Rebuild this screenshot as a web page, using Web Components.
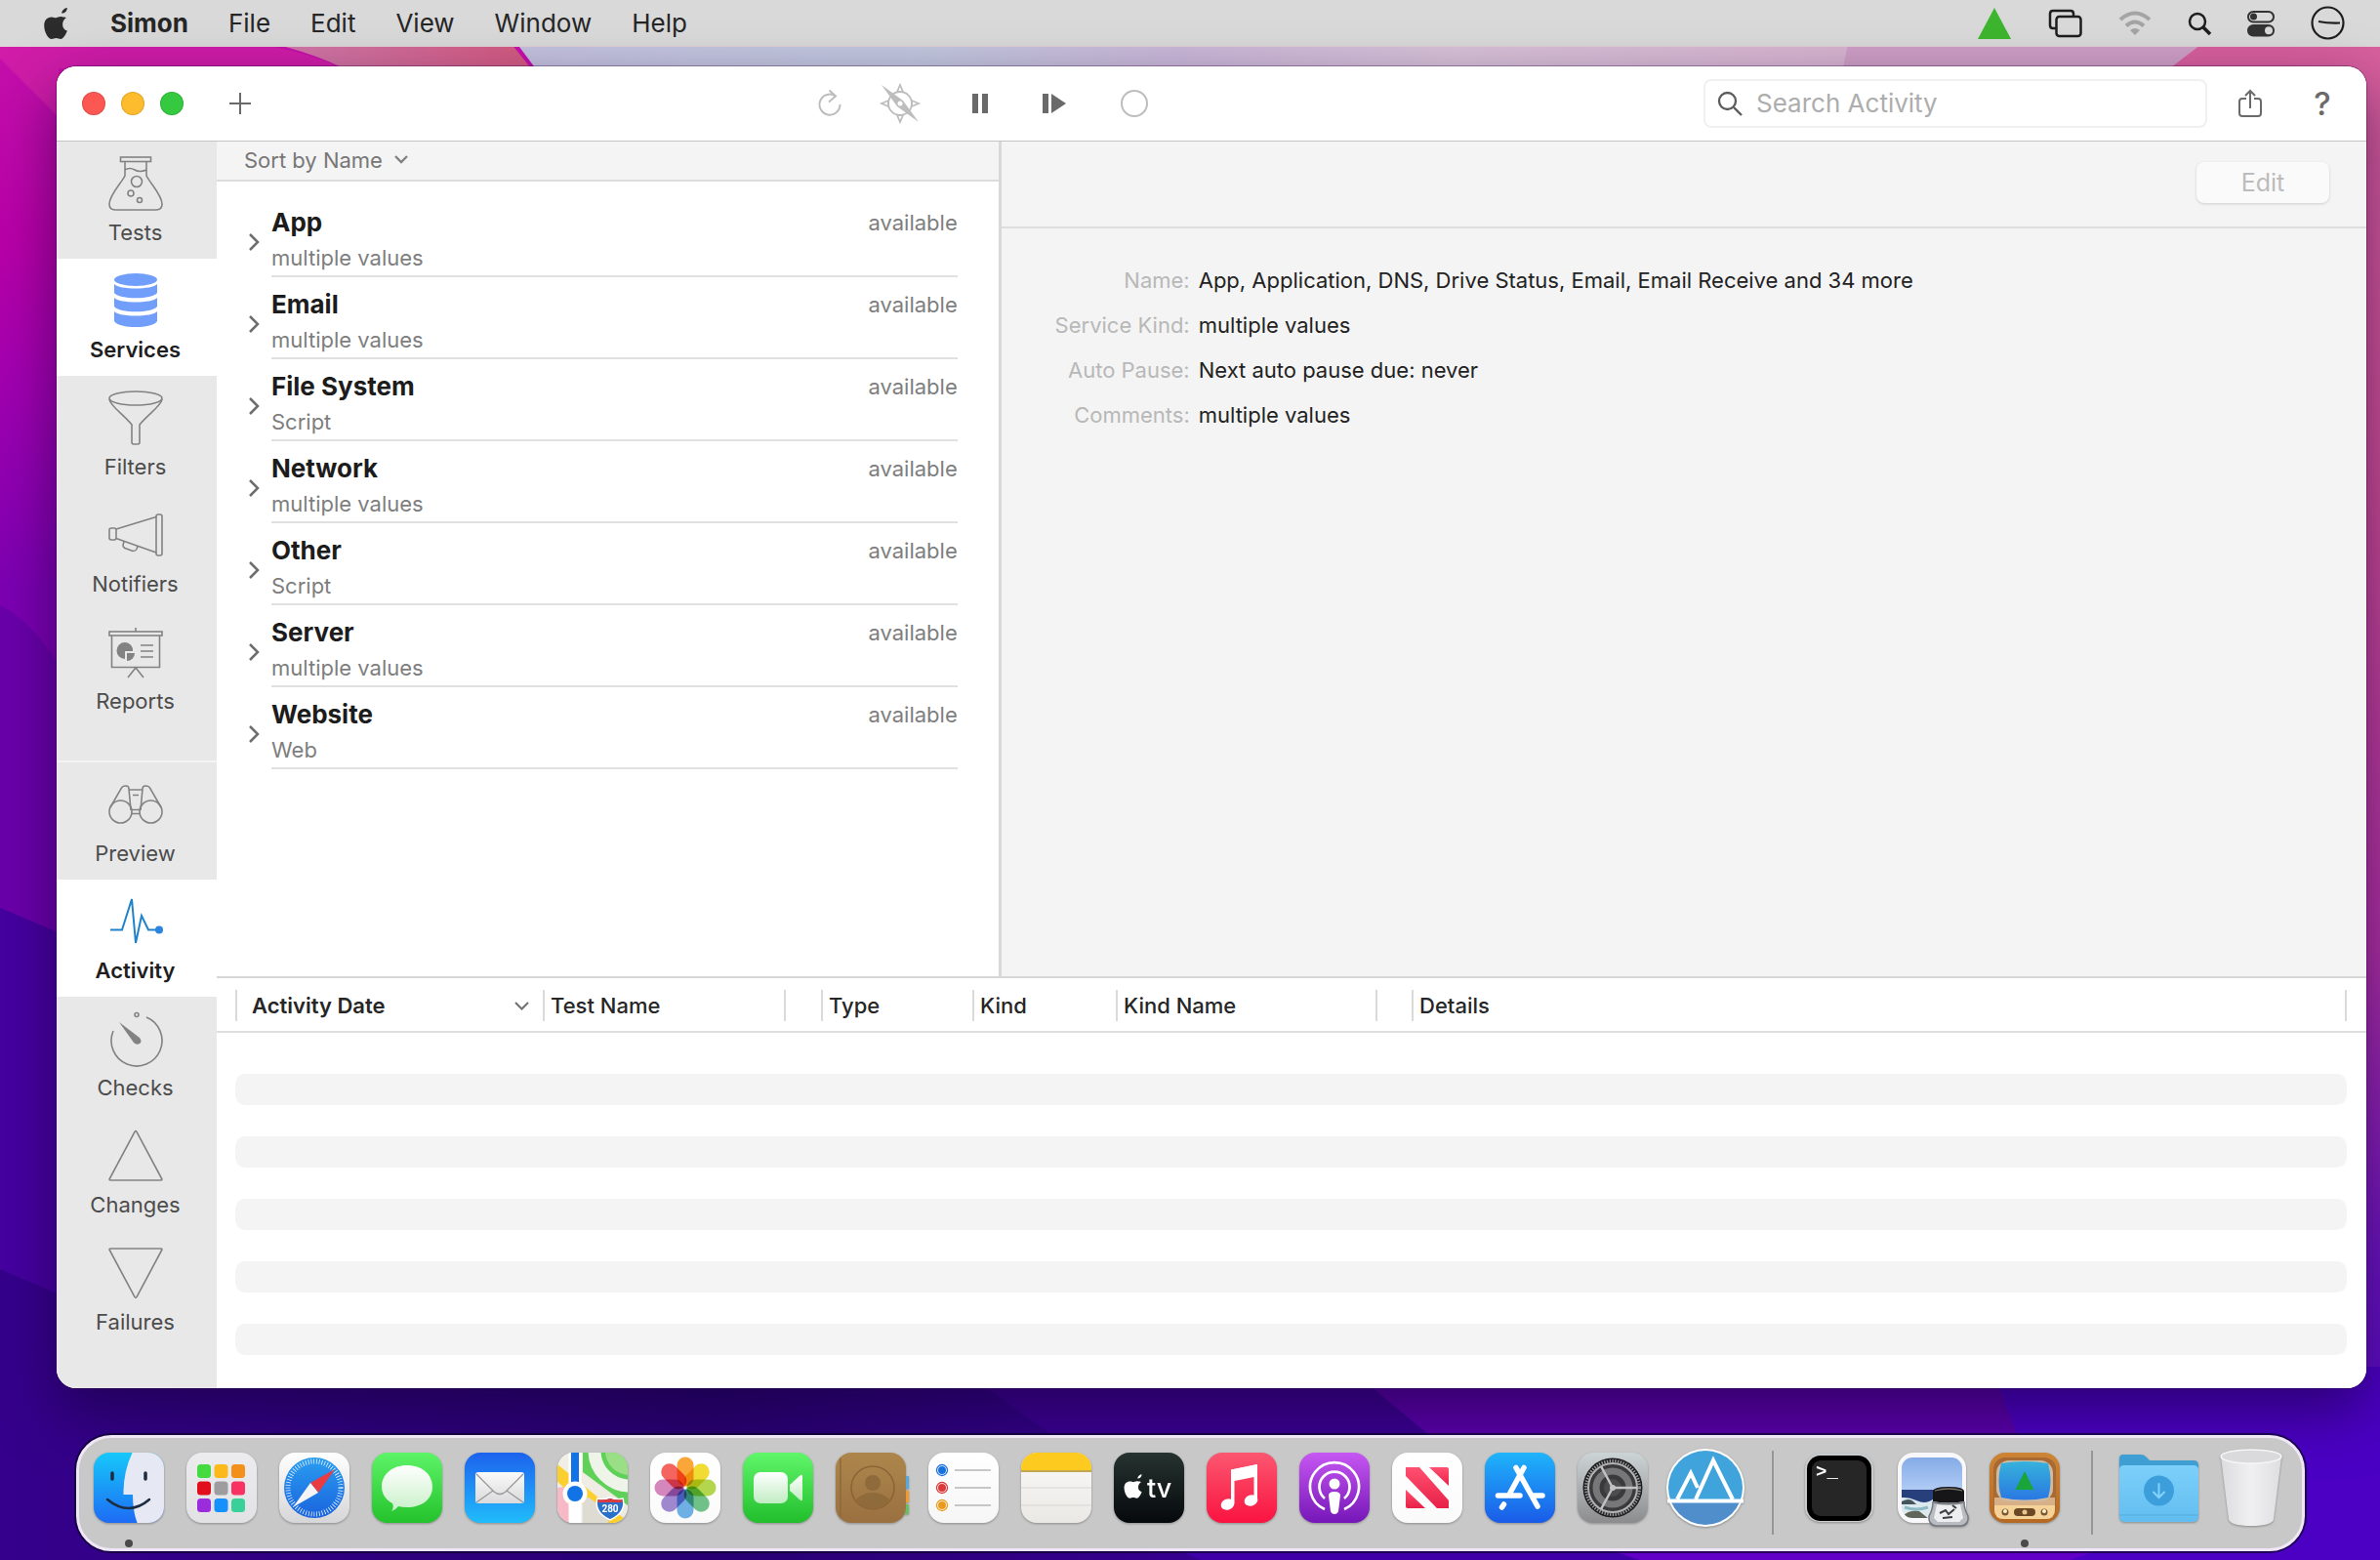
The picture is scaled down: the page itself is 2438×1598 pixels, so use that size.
<!DOCTYPE html>
<html lang="en">
<head>
<meta charset="utf-8">
<title>Simon</title>
<style>
html, body { margin: 0; height: 100%; }
body { font-family: Inter, "Liberation Sans", sans-serif; font-size: 22px; color: #262626; }
</style>
</head>
<body>
<mac-desktop>
  <menu-bar slot="menu"></menu-bar>
  <app-window>
    <tool-bar slot="toolbar"></tool-bar>
    <nav-rail slot="rail">
      <rail-item icon="tests">Tests</rail-item>
      <rail-item icon="services" active>Services</rail-item>
      <rail-item icon="filters">Filters</rail-item>
      <rail-item icon="notifiers">Notifiers</rail-item>
      <rail-item icon="reports">Reports</rail-item>
      <rail-item slot="lower" icon="preview">Preview</rail-item>
      <rail-item slot="lower" icon="activity" active>Activity</rail-item>
      <rail-item slot="lower" icon="checks">Checks</rail-item>
      <rail-item slot="lower" icon="changes">Changes</rail-item>
      <rail-item slot="lower" icon="failures">Failures</rail-item>
    </nav-rail>
    <service-list slot="list">
      <service-row kind="multiple values" status="available">App</service-row>
      <service-row kind="multiple values" status="available">Email</service-row>
      <service-row kind="Script" status="available">File System</service-row>
      <service-row kind="multiple values" status="available">Network</service-row>
      <service-row kind="Script" status="available">Other</service-row>
      <service-row kind="multiple values" status="available">Server</service-row>
      <service-row kind="Web" status="available">Website</service-row>
    </service-list>
    <detail-pane slot="detail">
      <detail-field label="Name:">App, Application, DNS, Drive Status, Email, Email Receive and 34 more</detail-field>
      <detail-field label="Service Kind:">multiple values</detail-field>
      <detail-field label="Auto Pause:">Next auto pause due: never</detail-field>
      <detail-field label="Comments:">multiple values</detail-field>
    </detail-pane>
    <activity-table slot="activity"></activity-table>
  </app-window>
  <app-dock slot="dock">
    <dock-icon icon="finder" title="Finder" running></dock-icon>
    <dock-icon icon="launchpad" title="Launchpad"></dock-icon>
    <dock-icon icon="safari" title="Safari"></dock-icon>
    <dock-icon icon="messages" title="Messages"></dock-icon>
    <dock-icon icon="mail" title="Mail"></dock-icon>
    <dock-icon icon="maps" title="Maps"></dock-icon>
    <dock-icon icon="photos" title="Photos"></dock-icon>
    <dock-icon icon="facetime" title="FaceTime"></dock-icon>
    <dock-icon icon="contacts" title="Contacts"></dock-icon>
    <dock-icon icon="reminders" title="Reminders"></dock-icon>
    <dock-icon icon="notes" title="Notes"></dock-icon>
    <dock-icon icon="tv" title="TV"></dock-icon>
    <dock-icon icon="music" title="Music"></dock-icon>
    <dock-icon icon="podcasts" title="Podcasts"></dock-icon>
    <dock-icon icon="news" title="News"></dock-icon>
    <dock-icon icon="appstore" title="App Store"></dock-icon>
    <dock-icon icon="settings" title="System Preferences"></dock-icon>
    <dock-icon icon="peaks" title="Peaks"></dock-icon>
    <dock-divider></dock-divider>
    <dock-icon icon="terminal" title="Terminal"></dock-icon>
    <dock-icon icon="viewer" title="Preview"></dock-icon>
    <dock-icon icon="simon" title="Simon" running></dock-icon>
    <dock-divider></dock-divider>
    <dock-icon icon="downloads" title="Downloads"></dock-icon>
    <dock-icon icon="trash" title="Trash"></dock-icon>
  </app-dock>
</mac-desktop>

<script>
const RESET = `
:host, *, *::before, *::after { box-sizing: border-box; }
button, input, select { font: inherit; color: inherit; background: none; border: 0; margin: 0; padding: 0; }
svg { display: block; overflow: visible; }
`;

function define(name, css, render) {
  customElements.define(name, class extends HTMLElement {
    constructor() {
      super();
      this.attachShadow({ mode: "open" });
    }
    connectedCallback() {
      this.shadowRoot.innerHTML = `<style>${RESET}${css}</style>${render(this)}`;
    }
  });
}

const APPLE = "M17 4c1-3 4-5 6-5 0 3-2 6-6 6zM22 10c-2 1-4 4-4 7 0 4 2 6 5 7-1 3-4 9-7 9-2 0-3-1-5-1s-3 1-5 1C3 33-2 26-2 18c0-6 4-9 8-9 2 0 4 1 5 1s4-2 7-1c2 0 3 0 4 1z";

/* ---------- rail icons, 56 x 56 ---------- */
const RAIL = {
  tests: `<rect x="12.500" y="1" width="31" height="4.500"/><path d="M17 5.500V20C13 28 1 40 1 49q0 6 6 6h42q6 0 6-6C55 40 43 28 39 20V5.500M17 14q5-3 10 0t12 0"/><circle cx="29" cy="26" r="5.500"/><circle cx="23" cy="38" r="3"/><circle cx="32" cy="45" r="2.500"/>`,
  services: `<g fill="#719efb" stroke="none"><ellipse cx="28" cy="6.500" rx="22" ry="6.500"/><path d="M6 11c5 6 39 6 44 0v9c-5 7-39 7-44 0zM6 25c5 6 39 6 44 0v9c-5 7-39 7-44 0zM6 39c5 6 39 6 44 0v10c-5 8-39 8-44 0z"/></g>`,
  filters: `<ellipse cx="28" cy="8" rx="27" ry="7"/><path d="M1 9c1 7 14 15 23 26v18q0 2 2 2h4q2 0 2-2V35C41 24 54 16 55 9"/>`,
  notifiers: `<rect x="49" y="7" width="6" height="42" rx="2"/><rect x="1" y="21" width="7" height="12" rx="2"/><path d="M8 22 49 9.500M8 31.500 49 46M16 34.500l-1 4q0 2 2 3l8 3q3 0 4-2l1-3"/>`,
  reports: `<path d="M28 3V7"/><rect x="1" y="7" width="54" height="4"/><path d="M3.500 11v32.500h49V11M20 54l8-10 8 10M33 21h13M33 27h13M33 33h13"/><path d="M17 18a8 8 0 1 0 0 17V27h8a8 8 0 0 0-8-9z" fill="#828282" stroke="none"/><path d="M19 29h8a8 8 0 0 1-8 8z" fill="#828282" stroke="none"/>`,
  preview: `<circle cx="12.500" cy="35.500" r="11.500"/><circle cx="43.500" cy="35.500" r="11.500"/><path d="M2 31 13 12q1-3 5-3 3 0 3 3l2 22M54 31 43 12q-1-3-5-3-3 0-3 3l-2 22M21 13h14M25 18.500h6M23 33.500h10M23.500 37.500h9"/>`,
  activity: `<path d="M2 36.500h12L24 5l4 45L34 22l7 14.500h9" stroke="#1f83cc" stroke-width="2" fill="none"/><circle cx="52" cy="36.500" r="4" fill="#2c84dc" stroke="none"/>`,
  checks: `<path d="M39 6A26 26 0 1 1 5 20"/><circle cx="29" cy="3.500" r="2"/><path d="M11 11 32 27q3 4 0 6-3 2-6-1z" fill="#828282" stroke="none"/>`,
  changes: `<path d="M27 3.500q1-2 2 0L55 52q0 1-1 1H2q-1 0-1-1z"/>`,
  failures: `<path d="M27 52.500q1 2 2 0L55 4q0-1-1-1H2q-1 0-1 1z"/>`
};

/* ---------- dock icons, 72 x 72 ---------- */
const grad = (id, ...stops) => `<linearGradient id="${id}" x1="0" y1="0" x2="0" y2="1">${stops.map((c, i) => `<stop offset="${i / (stops.length - 1)}" stop-color="${c}"/>`).join("")}</linearGradient>`;
const tile = (...c) => `<defs>${grad("bg", ...c)}<clipPath id="tc"><rect width="72" height="72" rx="16"/></clipPath></defs><rect width="72" height="72" rx="16" fill="url(#bg)"/>`;
const range = n => [...Array(n).keys()];

const DOCK = {
  finder: tile("#16c8fa", "#1e6bf4") + `<g clip-path="url(#tc)"><path d="M40-1Q30 20 30.500 43H40q0 18 5 30h28V-1z" fill="#e6e8f4"/></g><path d="M19 21v6M53 21v6" stroke="#1d2b40" stroke-width="3.500" stroke-linecap="round"/><path d="M14 48q22 18 43 0" fill="none" stroke="#1d2b40" stroke-width="2.500" stroke-linecap="round"/>`,
  launchpad: tile("#ececee", "#e2e2e4") + ["#45da3f", "#fcb91b", "#f3901a", "#e10e1c", "#9d9d9f", "#f83363", "#9a2cdc", "#1690fa", "#3ad09a"].map((c, i) => `<rect x="${11 + i % 3 * 17.500}" y="${12 + Math.floor(i / 3) * 17.500}" width="14" height="14" rx="3.500" fill="${c}"/>`).join(""),
  safari: tile("#ffffff", "#d6d6d8") + `<defs>${grad("sf", "#2a9df0", "#1a63dd")}</defs><circle cx="36" cy="36" r="31" fill="url(#sf)"/><circle cx="36" cy="36" r="27" fill="none" stroke="#e8f4ff" stroke-width="5" stroke-dasharray="0.800 2"/><path d="M57 17 40 41 32 31z" fill="#ea3b40"/><path d="M14 56 32 31 40 41z" fill="#f4f4f6"/>`,
  messages: tile("#5df468", "#24c22c") + `<defs>${grad("m", "#ffffff", "#c8f0c8")}</defs><path d="M36 13c15 0 26 9 26 22S51 56 36 56q-5 0-9-1-3 4-7 5 3-4 1-8C14 48 10 42 10 35c0-13 11-22 26-22z" fill="url(#m)"/>`,
  mail: tile("#1d62ee", "#20bcfb") + `<defs>${grad("ml", "#fafafa", "#dadadc")}</defs><rect x="11" y="20" width="50" height="32" rx="3" fill="url(#ml)"/><path d="m12 22 18 18q6 5 12 0l18-18M12 51l17-12M60 51 43 39" fill="none" stroke="#98989c" stroke-width="1.300"/>`,
  maps: tile("#f2efe6", "#eceae0") + `<g clip-path="url(#tc)"><path d="M0 36 12 34V72H0z" fill="#f7b9c6"/><path d="M26 0h46v54L26 20z" fill="#5fd058"/><path d="M0 12 74 72 56 80-2 28z" fill="#fbd02e"/><circle cx="74" cy="-2" r="36" fill="none" stroke="#eef4e8" stroke-width="13"/><circle cx="74" cy="-2" r="25" fill="#9ade86"/><path d="M32 46 52 60v14H26V46z" fill="#dedbd2"/><path d="M18 42V74" stroke="#fff" stroke-width="13"/><path d="M18-2V36" stroke="#fff" stroke-width="13"/><path d="M18-2v40" stroke="#1173e6" stroke-width="8"/><circle cx="18" cy="42" r="12.500" fill="#fff"/><circle cx="18" cy="42" r="8" fill="#1173e6"/><path d="M41 47q6 2 13-1 7 3 13 1 4 14-13 22-17-8-13-22z" fill="#2a6fc8" stroke="#fff" stroke-width="1.500"/><path d="M41.500 48q7 1 12.500-1 6 2 12.500 1v3h-25z" fill="#dc3c40"/></g><text x="54" y="61" font-family="Roboto, sans-serif" font-size="10" font-weight="700" fill="#fff" text-anchor="middle">280</text>`,
  photos: tile("#ffffff", "#fafafa") + `<g style="isolation:isolate">` + ["#fb9a1e", "#efd718", "#a8d035", "#5cb878", "#5aa4e0", "#9378c8", "#cf76b4", "#f2504a"].map((c, i) => `<rect x="27.500" y="4.500" width="17" height="30" rx="8.500" fill="${c}" fill-opacity=".88" style="mix-blend-mode:multiply" transform="rotate(${i * 45} 36 36)"/>`).join("") + `</g>`,
  facetime: tile("#60f66a", "#22be2c") + `<defs>${grad("f", "#ffffff", "#c0ecc2")}</defs><rect x="11" y="20" width="35" height="32" rx="7" fill="url(#f)"/><path d="M48 33 59 23q2-1 2 1v24q0 2-2 1L48 39z" fill="url(#f)"/>`,
  contacts: `<path d="M70 24h5v13h-5z" fill="#54aade"/><path d="M70 39h5v12h-5z" fill="#f39a2c"/><path d="M68 53h7v10h-7z" fill="#68c060"/>` + tile("#ad864c", "#9a7040") + `<path d="M5 6v60" stroke="#8e6838" stroke-width="1.500"/><g fill="none" stroke="#8a6434" stroke-width="1.500"><circle cx="38" cy="36" r="22"/></g><circle cx="38" cy="31" r="8" fill="#8f6a3a"/><path d="M21 48q7-7 17-7t17 7q-7 10-17 10T21 48z" fill="#8f6a3a"/>`,
  reminders: tile("#ffffff", "#f6f6f6") + ["#1971e0", "#dd3838", "#ea9b1c"].map((c, i) => `<circle cx="14" cy="${18 + i * 18}" r="5.500" fill="#fff" stroke="${c}" stroke-width="1.300"/><circle cx="14" cy="${18 + i * 18}" r="4" fill="${c}"/><path d="M27 ${18 + i * 18}H64" stroke="#b6b6b6" stroke-width="1.300"/>`).join(""),
  notes: tile("#fafafa", "#eae8e4") + `<g clip-path="url(#tc)"><path d="M0 0h72v18H0z" fill="#fdca20"/><path d="M0 19h72" stroke="#c3a650" stroke-width="2"/><path d="M0 36h72M0 54h72" stroke="#d8d6d2" stroke-width="1.200"/></g>`,
  tv: tile("#26332f", "#06090c") + `<g fill="#fff"><path d="${APPLE}" transform="translate(12 23) scale(.72)"/><text x="34" y="46" font-family="Inter, sans-serif" font-size="27" font-weight="500">tv</text></g>`,
  music: tile("#fb5770", "#fa1340") + `<g fill="#fff"><path d="M25 17.500 52 12v36h-3.500V25L28.500 29v23H25z"/><ellipse cx="21.500" cy="53" rx="7" ry="5.500" transform="rotate(-20 21.500 53)"/><ellipse cx="45.500" cy="49" rx="7" ry="5.500" transform="rotate(-20 45.500 49)"/><path d="M25 17.500 52 12v11L25 29z"/></g>`,
  podcasts: tile("#c657f2", "#7616b8") + `<g fill="none" stroke="#fff" stroke-width="2.700"><path d="M26 58a25 25 0 1 1 20 0"/><path d="M26 47a15.500 15.500 0 1 1 20 0"/></g><g fill="#fff"><circle cx="36" cy="32" r="5.500"/><path d="M30 44q0-4 6-4t6 4l-2 16q-1 3-4 3t-4-3z"/></g>`,
  news: tile("#ffffff", "#fafafa") + `<defs>${grad("n", "#ff5070", "#e82048")}</defs><g fill="url(#n)"><path d="M14 15h14L58 49v8H46L14 24z"/><path d="M38 15h18q2 0 2 2v17z"/><path d="M14 38 34 57H16q-2 0-2-2z"/></g>`,
  appstore: tile("#1fb4fb", "#1a5be8") + `<g stroke="#fff" stroke-width="5.500" stroke-linecap="round"><path d="M40 15.500 26 41M32 15.500 54 55M19.500 53l-2 3M13.500 44H36M49 44h10"/></g>`,
  settings: tile("#cdd4d6", "#8c8c8e") + `<circle cx="36" cy="36" r="30.500" fill="#1e1e20"/><circle cx="36" cy="36" r="27.500" fill="none" stroke="#9a9a9c" stroke-width="3" stroke-dasharray="1.400 1.400"/><circle cx="36" cy="36" r="25" fill="#3a3a3c" stroke="#b2b2b4" stroke-width="2"/><circle cx="36" cy="36" r="17" fill="none" stroke="#77777a" stroke-width="7"/><circle cx="36" cy="36" r="9" fill="#4c4c4e"/><path d="M36 36H61M36 36 24 14M36 36 24 58" stroke="#c2c2c4" stroke-width="2.500"/><circle cx="36" cy="36" r="3" fill="#c2c2c4"/>`,
  peaks: `<defs><clipPath id="pc"><circle cx="36" cy="36" r="38"/></clipPath></defs><circle cx="36" cy="36" r="40" fill="#fff"/><g clip-path="url(#pc)"><path d="M-4-4h80v56H-4z" fill="#41a3dc"/><path d="M-4 51h80v26H-4z" fill="#4f8dcb"/></g><path d="M-3 49.500h78" stroke="#fff" stroke-width="4"/><path d="M7 48 21 21l7 15M26 48 44 8 64 48" fill="none" stroke="#fff" stroke-width="4"/>`,
  terminal: `<rect x="1" y="1" width="70" height="70" rx="15" fill="#c8ccce"/><rect x="3" y="3" width="66" height="67" rx="14" fill="#000"/><rect x="8" y="8" width="56" height="57" rx="9" fill="#262626"/><text x="12" y="25" font-family="Liberation Mono, monospace" font-size="19" font-weight="700" fill="#fff">&gt;_</text>`,
  viewer: `<defs><clipPath id="vc"><rect x="5" y="5" width="62" height="62" rx="11"/></clipPath>${grad("sky", "#7fa6e4", "#b2cdf6")}</defs><rect x="1" width="70" height="72" rx="16" fill="#f8f8fa"/><g clip-path="url(#vc)"><path d="M0 0h72v40H0z" fill="url(#sky)"/><path d="M0 38h72v14H0z" fill="#27407c"/><path d="M0 47q10-3 20 2t18-2 34 4v24H0z" fill="#dce9ee"/><path d="M5 50q8-4 12 0t4 3H5z" fill="#44565c"/><path d="M5 66q8-8 18-6l10 8H5z" fill="#62665a"/><path d="M8 56q12 4 24 0" stroke="#8ebcc6" stroke-width="3" fill="none"/></g><path d="M37 40q0-5 16-5t16 5v10q-16 3-32 0z" fill="#161618"/><path d="M39 39q14-4 28 0" stroke="#77726a" fill="none" stroke-width="1.300"/><path d="M37 51q16 3 32 0 0 7 4 14 1 9-7 10H40q-8-1-7-10 4-7 4-14z" fill="#b9bcc0" stroke="#74787c" stroke-width="1.500"/><path d="M41 53q12 2 24 0l3 14-4 4H42l-4-4z" fill="#eceef0"/><path d="m44 62 6-3 3 4 6-5M47 67l10-1M57 54l4 3" stroke="#3c3e42" stroke-width="2" fill="none"/>`,
  simon: `<defs>${grad("wood", "#cd8434", "#b46a24")}${grad("scr", "#36b2dc", "#2a78e2")}</defs><rect width="72" height="72" rx="16" fill="url(#wood)"/><rect x="4" y="5" width="64" height="63" rx="12" fill="#a86a34"/><path d="M5 46h62v12q0 10-10 10H15Q5 68 5 58z" fill="#d8b088"/><rect x="7" y="8" width="58" height="42" rx="13" fill="#cdbba4"/><path d="M12 11q24-4 48 0 5 18 0 35-24 5-48 0-5-17 0-35z" fill="url(#scr)"/><path d="M36 19 45.500 38h-19z" fill="#1aa53a"/><path d="M5 54h62v4q0 10-10 10H15Q5 68 5 58z" fill="#f5d298"/><rect x="25" y="57" width="22" height="8" rx="4" fill="#6c4824"/><circle cx="16" cy="61" r="3.500" fill="#7a5a34"/><circle cx="56" cy="61" r="3.500" fill="#7a5a34"/><circle cx="16" cy="60" r="2" fill="#fff0cc"/><circle cx="56" cy="60" r="2" fill="#fff0cc"/><circle cx="36" cy="61" r="2.500" fill="#e8c890"/>`,
  downloads: `<defs>${grad("fo", "#7cd0fa", "#62bdf0")}</defs><path d="M-4 6q0-4 4-4h18q3 0 5 2l4 4h45q5 0 5 5v20H-4z" fill="#3f9ed4"/><path d="M-4 18q0-5 5-5h71q5 0 5 5v47q0 6-6 6H2q-6 0-6-6z" fill="url(#fo)"/><path d="M-4 64h81" stroke="#58b2e4" stroke-width="1.300"/><circle cx="36.500" cy="39" r="15.500" fill="#3c9fdc"/><path d="M36.500 32v13M31 40.500l5.500 5.500 5.500-5.500" fill="none" stroke="#83d3fc" stroke-width="2" stroke-linecap="round"/>`,
  trash: `<defs><linearGradient id="tr" x1="0" x2="1"><stop offset="0" stop-color="#dcdcde"/><stop offset=".5" stop-color="#f0f0f2"/><stop offset="1" stop-color="#dedee0"/></linearGradient></defs><path d="M5 4 13 68q1 7 23 7t23-7L67 4z" fill="url(#tr)"/><ellipse cx="36" cy="4" rx="31" ry="7" fill="#dadadc" stroke="#f6f6f8" stroke-width="1.500"/>`
};

define("mac-desktop", `
:host { display: flex; flex-direction: column; min-height: 100vh; position: relative; isolation: isolate; }
.wall { position: absolute; inset: 0; width: 100%; height: 100%; z-index: -1; }
main { flex: 1; display: flex; padding: 20px 14px 48px 58px; }
main ::slotted(*) { flex: 1; }
`, () => `
<svg class="wall" viewBox="0 0 2438 1598" preserveAspectRatio="none" aria-hidden="true">
  <defs>
    <linearGradient id="left" x1="0" y1="0" x2="0" y2="1"><stop offset="0" stop-color="#c914ac"/><stop offset=".25" stop-color="#b800a8"/><stop offset=".38" stop-color="#a400b0"/><stop offset=".6" stop-color="#7c00b2"/></linearGradient>
    <linearGradient id="base" x1="0" y1="0" x2="1" y2="0"><stop offset="0" stop-color="#35008c"/><stop offset=".3" stop-color="#280072"/><stop offset=".6" stop-color="#3c009c"/><stop offset="1" stop-color="#4a00cc"/></linearGradient>
    <linearGradient id="rose" x1="0" y1="0" x2="1" y2="0"><stop offset="0" stop-color="#d07cae"/><stop offset="1" stop-color="#d4587e"/></linearGradient>
    <linearGradient id="pale" x1="0" y1="0" x2="1" y2="0"><stop offset="0" stop-color="#c4c2de"/><stop offset=".3" stop-color="#c2c8de"/><stop offset=".5" stop-color="#cbb8d8"/><stop offset=".7" stop-color="#d8c2d8"/><stop offset="1" stop-color="#d8b4d0"/></linearGradient>
    <linearGradient id="right" x1="0" y1="0" x2="0" y2="1"><stop offset="0" stop-color="#d8609e"/><stop offset=".3" stop-color="#cc4c94"/><stop offset=".6" stop-color="#b030a4"/><stop offset=".8" stop-color="#6c14c0"/><stop offset="1" stop-color="#4a00cc"/></linearGradient>
  </defs>
  <rect width="2438" height="1598" fill="url(#base)"/>
  <path d="M0 0H600V1000L70 950 0 930z" fill="url(#left)"/>
  <path d="M0 620Q40 640 70 700V960L0 930z" fill="#6a00aa"/>
  <path d="M0 930 70 960V1330L0 1300z" fill="#4600a0"/>
  <path d="M0 40H230q80 10 120 30H60v50Q30 90 0 60z" fill="#d01ca8"/>
  <path d="M260 40H520L552 80H370Q330 55 260 40z" fill="url(#rose)"/>
  <path d="M526 40H1900V80H556z" fill="url(#pale)"/>
  <path d="M1894 40H2270L2220 80H1886z" fill="#cf9fc6"/>
  <path d="M2262 40H2438V1598H2400V100L2220 72z" fill="url(#right)"/>
  <path d="M980 1400H2438V1500H1120z" fill="#3b0092"/>
  <path d="M1380 1400H2438V1500H1500z" fill="#5a00aa"/>
  <path d="M2040 1400H2438V1598H1700L1640 1580 2100 1560z" fill="#4b00c4"/>
  <path d="M1200 1585H1650L1700 1598H1230z" fill="#3f00a8"/>
  <path d="M1640 1585H2160L2120 1598H1680z" fill="#6200c8"/>
</svg>
<slot name="menu"></slot>
<main><slot></slot></main>
<slot name="dock"></slot>`);

define("menu-bar", `
:host { display: flex; justify-content: space-between; align-items: center; height: 48px; padding: 0 36px 0 43px; background: #d9d9d9; border-bottom: 1px solid #e0cfd8; font-size: 26px; }
nav, .status { display: flex; align-items: center; }
nav { gap: 41px; }
nav button { line-height: 46px; color: #262626; }
nav .app { font-weight: 700; }
.status { gap: 37px; }
`, () => `
<nav aria-label="Menu bar">
  <button aria-label="Apple menu"><svg width="29" height="34" viewBox="-3 -2 28 36" fill="#2c2c2c"><path d="${APPLE}"/></svg></button>
  <button class="app">Simon</button><button>File</button><button>Edit</button><button>View</button><button>Window</button><button>Help</button>
</nav>
<div class="status">
  <button aria-label="Simon status"><svg width="36" height="34" viewBox="0 0 36 34"><path d="M18 1 35 33H1z" fill="#3eb52e"/></svg></button>
  <button aria-label="Windows"><svg width="35" height="30" viewBox="0 0 35 30" fill="none" stroke="#1e1e1e" stroke-width="2.500"><path d="M8 20H5q-3 0-3-3V5q0-3 3-3h18q3 0 3 3v2"/><rect x="8.500" y="8" width="25" height="20" rx="3"/></svg></button>
  <button aria-label="Wi-Fi"><svg width="34" height="26" viewBox="0 0 34 26" fill="none" stroke="#a4a4a4" stroke-width="4"><path d="M2 9q15-13 30 0M8 15.500q9-8 18 0"/><path d="M17 25 12 20q5-4 10 0z" fill="#a4a4a4" stroke="none"/></svg></button>
  <button aria-label="Spotlight"><svg width="24" height="26" viewBox="0 0 24 26" fill="none" stroke="#1e1e1e" stroke-width="2.500"><circle cx="10" cy="11" r="8"/><path d="m16 17 7 7" stroke-width="3.500"/></svg></button>
  <button aria-label="Control Center"><svg width="28" height="28" viewBox="0 0 28 28"><rect x="1" y="2" width="26" height="10.500" rx="5.250" fill="none" stroke="#333" stroke-width="2"/><circle cx="6.500" cy="7" r="3.500" fill="#333"/><rect y="15" width="28" height="12.500" rx="6.250" fill="#333"/><circle cx="22" cy="21.250" r="4" fill="#d9d9d9"/></svg></button>
  <button aria-label="Siri"><svg width="35" height="35" viewBox="0 0 35 35" fill="none" stroke="#1e1e1e" stroke-width="2.200"><circle cx="17.500" cy="17.500" r="16"/><path d="M8 16q10 2 22 1.500"/></svg></button>
</div>`);

define("app-window", `
:host { display: grid; grid-template: auto minmax(0, 1fr) auto / 164px minmax(0, 1fr); background: #fff; border-radius: 20px; overflow: hidden; box-shadow: 0 0 0 1px rgba(40, 0, 60, .35), 0 24px 60px rgba(20, 0, 50, .55); }
slot[name=toolbar]::slotted(*) { grid-column: 1 / -1; }
slot[name=rail]::slotted(*) { grid-row: 2 / 4; }
.split { display: grid; grid-template-columns: minmax(0, 4fr) minmax(0, 7fr); }
`, () => `
<slot name="toolbar"></slot>
<slot name="rail"></slot>
<div class="split"><slot name="list"></slot><slot name="detail"></slot></div>
<slot name="activity"></slot>`);

define("tool-bar", `
:host { display: flex; align-items: center; height: 77px; padding: 0 15px 0 26px; background: #fff; border-bottom: 1px solid #c4c4c4; }
.lights, .actions, .pair { display: flex; align-items: center; }
.lights { gap: 16px; }
.lights button { width: 24px; height: 24px; border-radius: 50%; background: var(--c); box-shadow: inset 0 0 0 1px rgba(0, 0, 0, .12); }
.tool { width: 40px; height: 40px; display: grid; place-items: center; color: #6a6a6a; }
.off { color: #bdbdbd; }
.add { margin-left: 38px; }
.actions { gap: 42px; margin: 0 auto; }
.first { gap: 32px; } .second { gap: 36px; }
.search { display: flex; align-items: center; gap: 14px; flex: 0 1 516px; height: 50px; padding: 0 12px; border: 2px solid #f0f0f0; border-radius: 8px; margin-right: 24px; }
input { flex: 1; min-width: 0; font-size: 26px; line-height: 32px; outline: 0; appearance: none; }
input::placeholder { color: #adadad; opacity: 1; }
.help { width: 60px; margin-left: 24px; font-size: 33px; line-height: 40px; font-weight: 500; }
`, () => `
<div class="lights">
  <button style="--c:#fc5753" aria-label="Close"></button><button style="--c:#fdbc2e" aria-label="Minimise"></button><button style="--c:#35c93f" aria-label="Zoom"></button>
</div>
<button class="tool add" aria-label="Add"><svg width="22" height="22" viewBox="0 0 22 22" stroke="currentColor" stroke-width="2"><path d="M11 0v22M0 11h22"/></svg></button>
<div class="actions">
  <div class="pair first">
    <button class="tool off" aria-label="Refresh"><svg width="24" height="30" viewBox="0 0 24 30" fill="none" stroke="currentColor" stroke-width="2"><path d="M18 7.500A10.500 10.500 0 1 0 22.500 16M11.500 1.500l6.500 6-7 6"/></svg></button>
    <button class="tool off" aria-label="Stop checking"><svg width="40" height="40" viewBox="0 0 40 40" fill="none" stroke="currentColor" stroke-width="1.800"><circle cx="20" cy="20" r="12"/><path d="m20 1-3 7h6zM20 39l-3-7h6zM1 20l7-3v6zM39 20l-7-3v6z"/><path d="M1 1 23 17 39 39 17 23z" fill="currentColor" stroke="none"/><circle cx="20" cy="20" r="2.500" fill="#fff" stroke="none"/></svg></button>
  </div>
  <div class="pair second">
    <button class="tool" aria-label="Pause"><svg width="16" height="20" viewBox="0 0 16 20" fill="currentColor"><path d="M0 0h6v20H0zM10 0h6v20h-6z"/></svg></button>
    <button class="tool" aria-label="Resume"><svg width="24" height="20" viewBox="0 0 24 20" fill="currentColor"><path d="M0 0h6v20H0zM9 0l15 10L9 20z"/></svg></button>
  </div>
  <button class="tool off" aria-label="Idle"><svg width="28" height="28" viewBox="0 0 28 28" fill="none" stroke="currentColor" stroke-width="2"><circle cx="14" cy="14" r="13"/></svg></button>
</div>
<label class="search"><svg width="26" height="26" viewBox="0 0 26 26" fill="none" stroke="#5c5c5c" stroke-width="2.300"><circle cx="10.500" cy="10.500" r="8.500"/><path d="m17 17 8 8"/></svg><input type="search" aria-label="Search Activity" placeholder="Search Activity"></label>
<button class="tool" aria-label="Share"><svg width="24" height="30" viewBox="0 0 24 30" fill="none" stroke="currentColor" stroke-width="2"><path d="M8 10H4q-3 0-3 3v12q0 3 3 3h16q3 0 3-3V13q0-3-3-3h-4M12 20V2M7 7l5-5 5 5"/></svg></button>
<button class="tool help" aria-label="Help">?</button>`);

define("nav-rail", `
:host { display: flex; flex-direction: column; background: #e8e8e8; box-shadow: inset 3px 0 #ede7ee; }
.lower { margin-top: 34px; border-top: 2px solid #f4f4f4; }
`, () => `<slot></slot><div class="lower"><slot name="lower"></slot></div>`);

define("rail-item", `
:host { display: block; color: #4c4c4c; }
:host([active]) { background: #fff; color: #1e1e1e; font-weight: 600; }
button { width: 100%; height: 120px; display: flex; flex-direction: column; align-items: center; padding: 15px 3px 0 0; gap: 8px; }
span { line-height: 28px; font-size: 22px; }
`, el => `<button><svg width="56" height="56" viewBox="0 0 56 56" fill="none" stroke="#828282" stroke-width="1.600">${RAIL[el.getAttribute("icon")]}</svg><span><slot></slot></span></button>`);

define("service-list", `
:host { display: flex; flex-direction: column; background: #fff; }
.sort { height: 41px; display: flex; align-items: center; gap: 12px; padding: 0 28px 2px; background: #f4f4f4; border-bottom: 2px solid #dcdcdc; color: #777; }
select { appearance: none; line-height: 30px; font-size: 22px; }
.rows { padding: 14px 42px 0 32px; }
`, () => `<div class="sort"><select aria-label="Sort order"><option>Sort by Name</option></select><svg width="14" height="9" viewBox="0 0 14 9" fill="none" stroke="#808080" stroke-width="2.300"><path d="m1 1 6 6 6-6"/></svg></div><div class="rows"><slot></slot></div>`);

define("service-row", `
:host { display: flex; gap: 12px; height: 84px; }
.open { width: 12px; padding-top: 12px; }
.body { flex: 1; display: grid; grid-template-columns: 1fr auto; grid-template-rows: 36px 34px; padding-top: 10px; border-bottom: 2px solid #e0e0e0; line-height: 36px; color: #7e7e7e; }
strong { font-size: 26px; font-weight: 700; color: #1c1c1c; }
`, el => `<button class="open" aria-label="Expand"><svg width="12" height="18" viewBox="0 0 12 18" fill="none" stroke="#6e6e6e" stroke-width="2.500"><path d="m2 1 8 8-8 8"/></svg></button><div class="body"><strong><slot></slot></strong><span>${el.getAttribute("status")}</span><span>${el.getAttribute("kind")}</span></div>`);

define("detail-pane", `
:host { display: block; background: #f4f4f4; border-left: 3px solid #d8d8d8; }
header { height: 89px; display: flex; justify-content: flex-end; align-items: center; padding: 0 38px 4px 0; border-bottom: 2px solid #dedede; }
button { width: 136px; height: 42px; border-radius: 8px; background: #fafafa; color: #bcbcbc; font-size: 25px; box-shadow: 0 1px 3px rgba(0, 0, 0, .16); }
dl { margin: 0; padding-top: 30px; }
`, () => `<header><button disabled>Edit</button></header><dl><slot></slot></dl>`);

define("detail-field", `
:host { display: flex; gap: 9px; line-height: 46px; }
dt { width: 193px; text-align: right; color: #b8b8b8; }
dd { margin: 0; color: #222; }
`, el => `<dt>${el.getAttribute("label")}</dt><dd><slot></slot></dd>`);

define("activity-table", `
:host { display: block; padding: 0 20px 34px 19px; border-top: 2px solid #d6d6d6; background: linear-gradient(#dedede, #dedede) 0 54px / 100% 2px no-repeat #fff; }
table { width: 100%; table-layout: fixed; border-collapse: separate; border-spacing: 0; }
th { height: 56px; padding: 0 0 0 8px; font-size: 22px; font-weight: 500; text-align: left; color: #262626; background: linear-gradient(#dadada, #dadada) 0 12px / 2px 32px no-repeat; }
th:last-child { background: linear-gradient(#dadada, #dadada) 0 12px / 2px 32px no-repeat, linear-gradient(#dadada, #dadada) 100% 12px / 2px 32px no-repeat; }
.sorted { font-weight: 600; padding: 0 14px 0 17px; }
.sorted div { display: flex; justify-content: space-between; align-items: center; }
td { height: 32px; padding: 0; border-radius: 10px; }
.gap td { height: 10px; }
.odd td { background: #f4f4f4; }
`, () => `
<table>
  <colgroup><col style="width:315px"><col style="width:247px"><col style="width:38px"><col style="width:155px"><col style="width:147px"><col style="width:266px"><col style="width:37px"><col></colgroup>
  <thead><tr><th class="sorted" aria-sort="descending"><div>Activity Date<svg width="15" height="9" viewBox="0 0 15 9" fill="none" stroke="#707070" stroke-width="2"><path d="m1 1 6.500 6.500L14 1"/></svg></div></th><th>Test Name</th><th></th><th>Type</th><th>Kind</th><th>Kind Name</th><th></th><th>Details</th></tr></thead>
  <tbody><tr class="gap"><td colspan="8"></td></tr>${range(10).map(i => `<tr class="${i % 2 ? "odd" : "even"}"><td colspan="8"></td></tr>`).join("")}</tbody>
</table>`);

define("app-dock", `
:host { display: flex; justify-content: center; padding-bottom: 9px; }
nav { display: flex; height: 119px; padding: 15px 4px 0; background: #c8c8c8; border: 3px solid #efe6f6; border-radius: 36px; box-shadow: 0 0 0 2px rgba(10, 0, 40, .7); }
`, () => `<nav aria-label="Dock"><slot></slot></nav>`);

define("dock-icon", `
:host { display: block; width: 95px; }
button { width: 100%; display: flex; flex-direction: column; align-items: center; gap: 17px; }
svg { filter: drop-shadow(0 1px 1px rgba(0, 0, 0, .3)); }
:host([running]) button::after { content: ""; width: 8px; height: 8px; border-radius: 50%; background: #4a4a4a; }
`, el => `<button aria-label="${el.title}"><svg width="72" height="72" viewBox="0 0 72 72">${DOCK[el.getAttribute("icon")]}</svg></button>`);

define("dock-divider", `
:host { display: flex; justify-content: center; width: 42px; }
i { width: 2px; height: 86px; background: #969696; margin-top: -2px; }
`, () => `<i></i>`);
</script>
</body>
</html>
